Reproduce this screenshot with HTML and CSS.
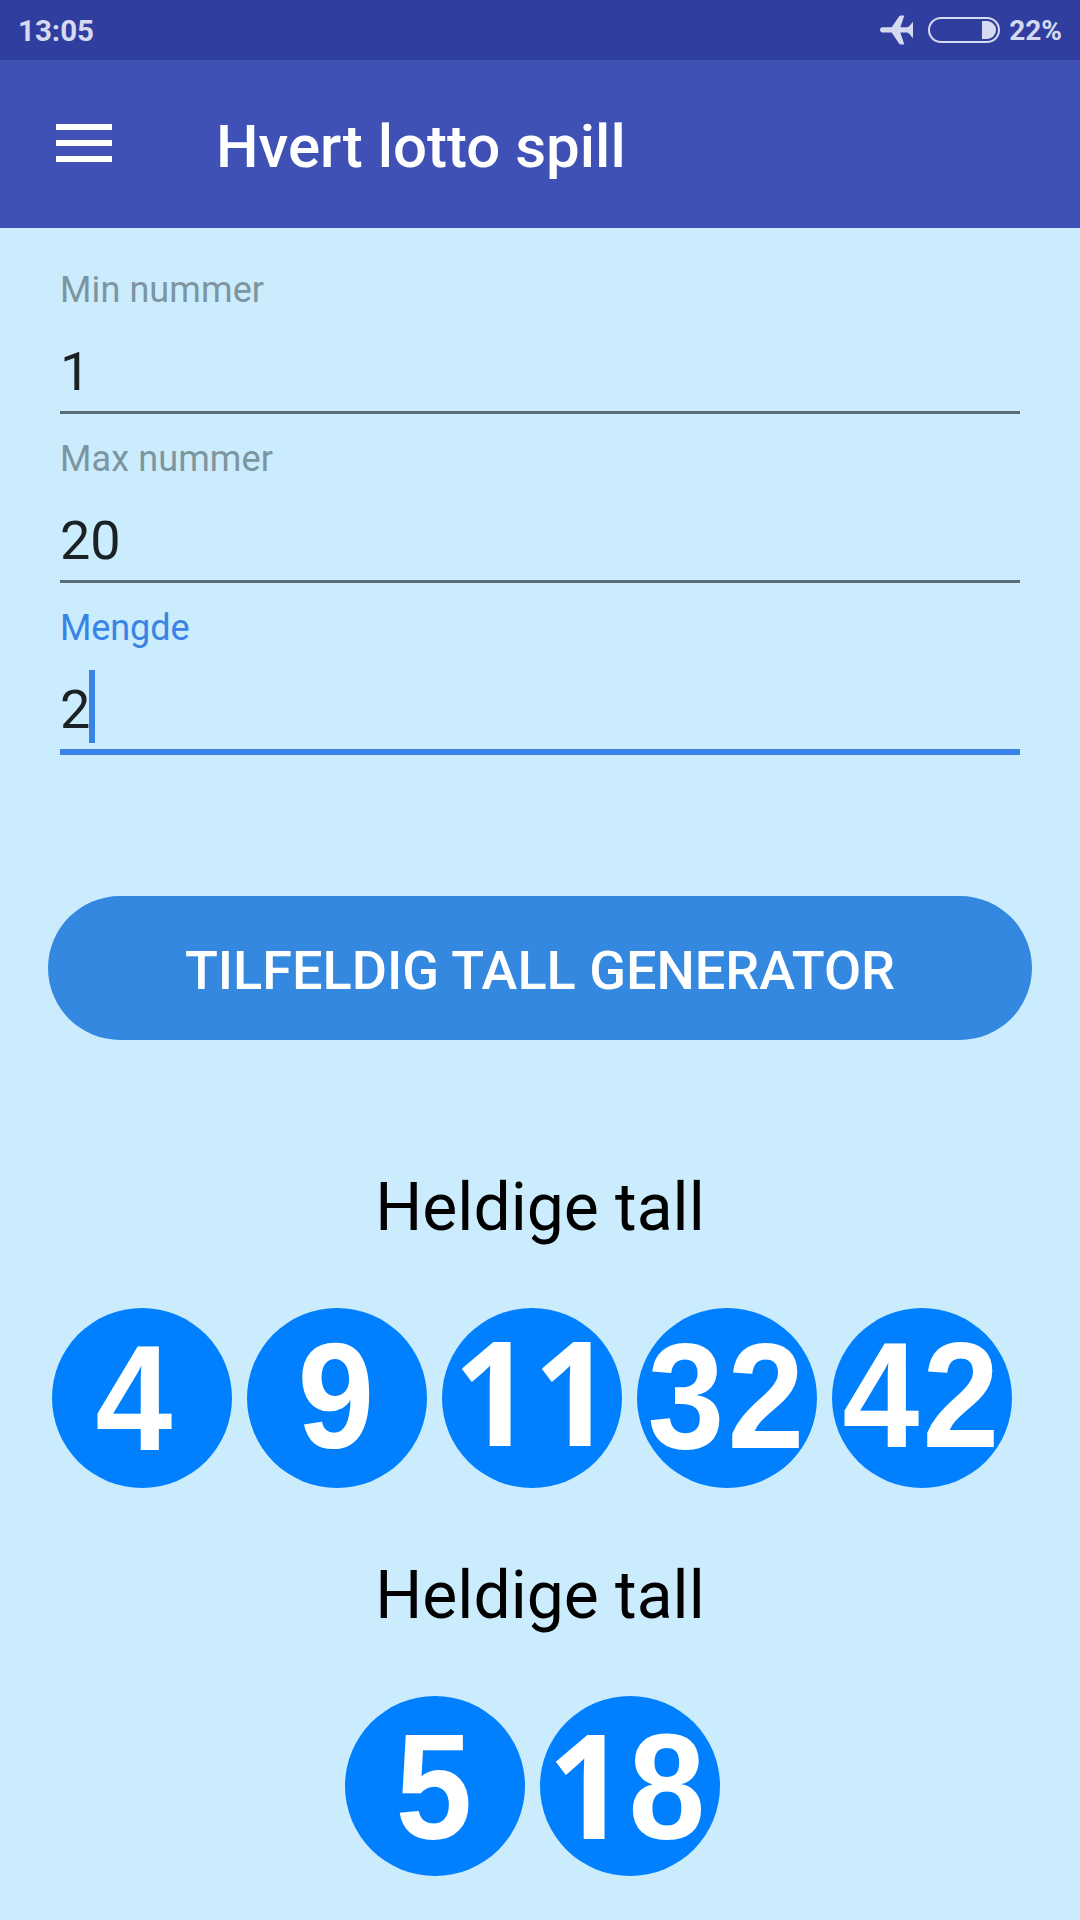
FILE: index.html
```html
<!DOCTYPE html>
<html lang="no">
<head>
    <meta charset="UTF-8">
    <meta name="viewport" content="width=device-width, initial-scale=1.0">
    <title>Hvert lotto spill</title>
    <link rel="stylesheet" href="styles.css">
</head>
<body>
    <div class="status-bar">
        <span class="time">13:05</span>
        <div class="status-icons">
            <svg class="plane" viewBox="0 0 99 89">
                <path d="M6 36H35L57 4Q60 1 63 1H73L61 36H82Q89 34 95 24Q96 21 99 21V68Q96 68 95 65Q89 54 82 52H61L73 88H63Q60 88 57 85L35 52H6Q0 51 0 44Q0 37 6 36Z"/>
            </svg>
            <div class="battery"><div class="battery-level"></div></div>
            <span class="percent">22%</span>
        </div>
    </div>

    <header class="app-bar">
        <button class="menu-btn" aria-label="Meny">
            <span></span>
            <span></span>
            <span></span>
        </button>
        <h1>Hvert lotto spill</h1>
    </header>

    <main>
        <form id="lotto-form">
            <div class="field">
                <label for="min">Min nummer</label>
                <input type="text" id="min" name="min" value="1">
            </div>
            <div class="field">
                <label for="max">Max nummer</label>
                <input type="text" id="max" name="max" value="20">
            </div>
            <div class="field active">
                <label for="amount">Mengde</label>
                <input type="text" id="amount" name="amount" value="2">
                <span class="caret"></span>
            </div>
            <button type="button" class="generate-btn">TILFELDIG TALL GENERATOR</button>
        </form>

        <section class="result">
            <h2>Heldige tall</h2>
            <div class="balls">
                <div class="ball n4"><span>4</span></div>
                <div class="ball n9"><span>9</span></div>
                <div class="ball n11"><span class="one">1</span><span class="one">1</span></div>
                <div class="ball n32"><span>3</span><span>2</span></div>
                <div class="ball n42"><span>4</span><span>2</span></div>
            </div>
        </section>

        <section class="result">
            <h2>Heldige tall</h2>
            <div class="balls">
                <div class="ball n5"><span>5</span></div>
                <div class="ball n18"><span class="one">1</span><span>8</span></div>
            </div>
        </section>
    </main>
</body>
</html>
```

FILE: styles.css
```css
* {
    box-sizing: border-box;
}
body {
    margin: 0;
    font-family: Roboto, sans-serif;
    background-color: #cbecfd;
    min-height: 1920px;
}

/* Status bar */
.status-bar {
    display: flex;
    justify-content: space-between;
    align-items: center;
    height: 60px;
    padding: 0 18px;
    background-color: #303f9f;
    color: #d6daf0;
    font-weight: 700;
}
.time {
    font-size: 29.5px;
    padding-top: 1px;
}
.status-icons {
    display: flex;
    align-items: center;
}
.plane {
    width: 33px;
    height: 30px;
    margin-right: 15px;
    fill: #d6daf0;
}
.battery {
    display: flex;
    justify-content: flex-end;
    width: 72px;
    height: 26px;
    padding: 2px;
    margin-right: 9px;
    border: 2px solid #d6daf0;
    border-radius: 13px;
}
.battery-level {
    width: 14px;
    height: 18px;
    background-color: #d6daf0;
    border-radius: 0 9px 9px 0;
}
.percent {
    font-size: 28px;
}

/* App bar */
.app-bar {
    display: flex;
    align-items: flex-start;
    height: 168px;
    padding: 51px 56px;
    background-color: #3f51b5;
}
.menu-btn {
    display: flex;
    flex-direction: column;
    gap: 10px;
    width: 56px;
    margin: 13px 104px 0 0;
    padding: 0;
    background: none;
    border: none;
}
.menu-btn span {
    height: 6px;
    background-color: #fff;
}
h1 {
    margin: 1px 0 0;
    color: #fff;
    font-size: 60px;
    font-weight: 500;
    line-height: 70px;
}

/* Form */
main {
    padding: 17px 48px 0;
}
.field {
    position: relative;
    padding: 24px 0 0;
    margin: 0 12px;
}
label {
    display: block;
    color: #7c959f;
    font-size: 36px;
    line-height: 42px;
    letter-spacing: 0.1px;
}
input {
    display: block;
    width: 100%;
    height: 103px;
    padding: 29px 0 8px;
    background: none;
    border: none;
    border-bottom: 3px solid #5b6e78;
    color: #1a2226;
    font-family: inherit;
    font-size: 54px;
    line-height: 63px;
    outline: none;
}
.active label {
    color: #3884e6;
    letter-spacing: -0.1px;
}
.active input {
    height: 106px;
    border-bottom: 6px solid #3884e6;
}
.caret {
    position: absolute;
    left: 29px;
    bottom: 12px;
    width: 6px;
    height: 73px;
    background-color: #3884e6;
}
.generate-btn {
    display: block;
    width: 100%;
    height: 144px;
    margin-top: 141px;
    padding: 4px 0 0;
    background-color: #3488e0;
    color: #fff;
    border: none;
    border-radius: 72px;
    font-family: inherit;
    font-size: 54px;
    font-weight: 500;
}

/* Results */
.result {
    height: 388px;
    padding-top: 129px;
}
h2 {
    margin: 0 0 61px;
    color: #000;
    font-size: 66px;
    font-weight: 400;
    line-height: 78px;
    text-align: center;
}
.balls {
    display: flex;
    justify-content: center;
    gap: 15px;
    margin-right: 16px;
}
.ball {
    display: flex;
    justify-content: center;
    align-items: baseline;
    width: 180px;
    height: 180px;
    border-radius: 50%;
    background-color: #0080ff;
    color: #fff;
    font-family: "Liberation Sans", Arial, sans-serif;
    font-size: 150px;
    font-weight: 700;
    line-height: 172px;
}
.ball span {
    display: flex;
    justify-content: center;
    width: 80px;
    transform: scaleX(0.92);
}
.ball .one {
    font-family: "Open Sans", sans-serif;
    font-size: 146px;
    transform: scaleX(0.94);
}

/* The digits sit a little differently on each ball */
.n4 {
    padding: 4px 16px 0 0;
}
.n9 {
    padding: 2px 2px 0 0;
}
.n11 {
    padding-left: 2px;
}
.n11 span {
    margin-top: -4px;
}
.n32 {
    padding: 2px 3px 0 0;
}
.n42 {
    padding: 1px 3px 0 0;
}
.n5 {
    padding: 5px 2px 0 0;
}
.n18 {
    padding: 1px 5px 0 0;
}
```
